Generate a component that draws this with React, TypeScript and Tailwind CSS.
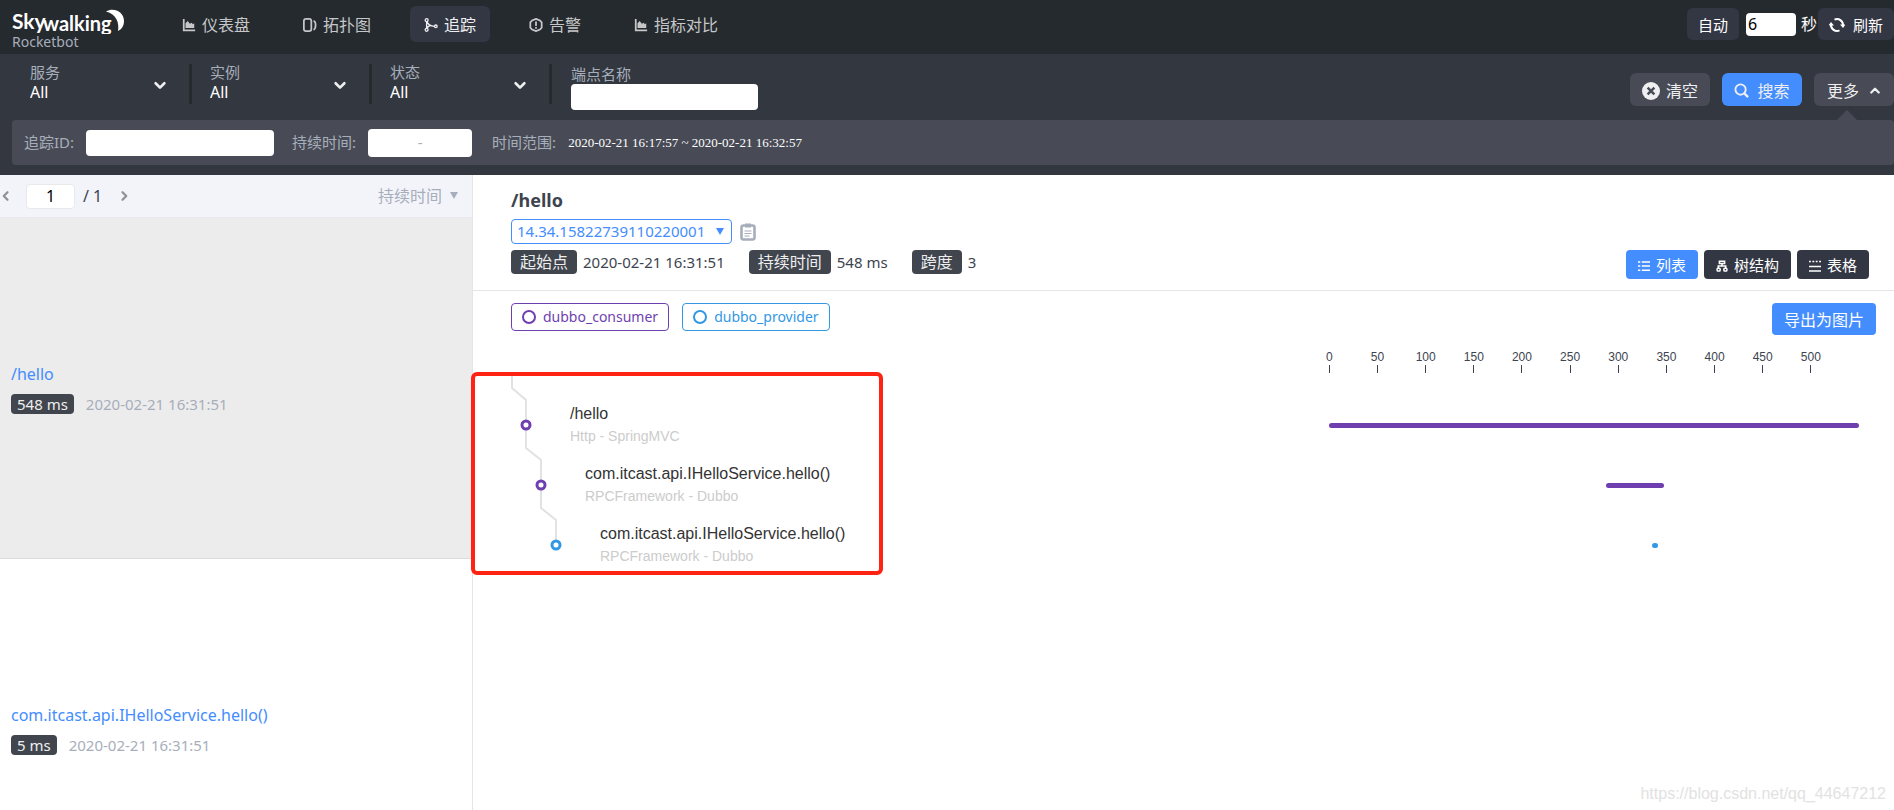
import type { ComponentProps, ReactNode } from 'react'
import clsx from 'clsx'

type IconProps = ComponentProps<'svg'>

const Icon = ({ className, children, ...props }: IconProps) => (
  <svg
    viewBox="0 0 16 16"
    fill="none"
    stroke="currentColor"
    strokeWidth="2"
    aria-hidden="true"
    className={clsx('shrink-0', className)}
    {...props}
  >
    {children}
  </svg>
)

const ChartIcon = (props: IconProps) => (
  <Icon {...props}>
    <path d="M2 1v13h13" />
    <path d="M4 11.500V6l2.500-2.500L9 6.500l2-1 1.500 1.500L14 6v5.500z" fill="currentColor" stroke="none" />
  </Icon>
)

const TopologyIcon = (props: IconProps) => (
  <Icon {...props}>
    <rect x="1" y="1" width="8.500" height="14" rx="2.500" />
    <path d="M12 3.500c3.200 0 3.200 9 0 10" />
  </Icon>
)

const TraceIcon = (props: IconProps) => (
  <Icon strokeWidth="1.500" {...props}>
    <circle cx="3" cy="2.500" r="1.700" />
    <circle cx="3" cy="13.500" r="1.700" />
    <circle cx="13.500" cy="9.500" r="1.500" />
    <path d="M3 4v8M3.500 4c1 4 4 5.200 8.500 5.500M3.500 12c.500-2 2-3 4-3.200" />
  </Icon>
)

const AlarmIcon = (props: IconProps) => (
  <Icon {...props}>
    <path d="M8 1l4.500 1.800L14.500 5v6l-2 2.200L8 15l-4.500-1.800-2-2.200V5l2-2.200z" />
    <path d="M8 4v5M8 10.300v2" />
  </Icon>
)

const RefreshIcon = (props: IconProps) => (
  <Icon {...props}>
    <path d="M5.500 2.600A6 6 0 0 1 14 8.500M10.500 13.400A6 6 0 0 1 2 7.500" />
    <path d="M11 7.500h5.500L14 11zM-.5 8.500H5L2 5z" fill="currentColor" stroke="none" />
  </Icon>
)

const ClearIcon = (props: IconProps) => (
  <Icon {...props}>
    <circle cx="8" cy="8" r="8" fill="currentColor" stroke="none" />
    <path d="M5 5l6 6M11 5l-6 6" stroke="#484b55" strokeWidth="2.200" />
  </Icon>
)

const SearchIcon = (props: IconProps) => (
  <Icon {...props}>
    <circle cx="7" cy="7" r="5.500" />
    <path d="M11 11l4 4" strokeWidth="2.500" />
  </Icon>
)

const ChevronIcon = (props: IconProps) => (
  <Icon strokeWidth="3" strokeLinecap="round" strokeLinejoin="round" {...props}>
    <path d="M3 6l5 5 5-5" />
  </Icon>
)

const ListIcon = (props: IconProps) => (
  <Icon {...props}>
    <path d="M0 2.500h3M5 2.500h11M0 8h3M5 8h11M0 13.500h3M5 13.500h11" />
  </Icon>
)

const TreeIcon = (props: IconProps) => (
  <Icon {...props}>
    <path d="M4.500 1.500h7v3h-7z" />
    <path d="M8 5v3M3 10.500V8h10v2.500" />
    <rect x="1.500" y="11" width="4" height="3.500" rx="1" />
    <rect x="10.500" y="11" width="4" height="3.500" rx="1" />
  </Icon>
)

const TableIcon = (props: IconProps) => (
  <Icon {...props}>
    <path d="M0 2h2.500M4.500 2H7M9 2h2.500M13.500 2H16M0 8.500h16M0 14.500h16" />
  </Icon>
)

const ClipboardIcon = (props: IconProps) => (
  <svg viewBox="0 0 16 18" fill="none" stroke="currentColor" aria-hidden="true" {...props}>
    <rect x="1.500" y="2.500" width="13" height="14" rx="2" strokeWidth="2.600" />
    <path d="M5 2.500h6" strokeWidth="4" />
    <path d="M4.500 8h7M4.500 10.500h7M4.500 13h5" />
  </svg>
)

const Logo = () => (
  <div className="w-[168px] shrink-0 pl-3">
    <svg viewBox="0 0 114 30" className="h-[30px] w-[114px]" fill="#fff" role="img" aria-label="Skywalking">
      <g fontFamily="Lato, sans-serif" fontWeight="700">
        <text x="0" y="25" fontSize="21">
          Sky
        </text>
        <text x="31" y="27" fontSize="20">
          walking
        </text>
      </g>
      <path d="M94 7.500c8-4.500 18 .500 18 9.500 0 5-2.500 8.500-6 10 1.500-8-1.500-17-12-19.500z" />
    </svg>
    <div className="text-sm leading-4 text-[#a7aebb]">Rocketbot</div>
  </div>
)

const navItems = [
  { label: '仪表盘', icon: ChartIcon },
  { label: '拓扑图', icon: TopologyIcon },
  { label: '追踪', icon: TraceIcon, active: true },
  { label: '告警', icon: AlarmIcon },
  { label: '指标对比', icon: ChartIcon },
]

const Header = () => (
  <header className="flex h-[54px] shrink-0 items-center bg-[#252a2f]">
    <Logo />
    <nav className="flex items-center gap-[25px] pb-1.5">
      {navItems.map(({ label, icon: NavIcon, active }) => (
        <a
          key={label}
          href="#"
          className={clsx(
            'flex h-9 items-center gap-1.5 rounded-md px-3.5 pt-0.5',
            active ? 'bg-[#333744] text-[#efeff1]' : 'text-[#c5c7c9]',
          )}
        >
          <NavIcon className="size-3.5" />
          {label}
        </a>
      ))}
    </nav>
    <div className="ml-auto flex items-center pb-1.5 text-[15px] text-white">
      <button className="h-8 rounded-md bg-[#333744] px-[11px] pt-0.5">自动</button>
      <input
        aria-label="刷新间隔"
        defaultValue="6"
        className="ml-[7px] mr-px h-[23px] w-[50px] rounded-sm bg-white pl-0.5 text-base text-black"
      />
      <span className="ml-1 text-base">秒</span>
      <button className="ml-px flex h-8 items-center gap-2 rounded-md bg-[#333744] px-[11px] pt-0.5">
        <RefreshIcon className="size-4" />
        刷新
      </button>
    </div>
  </header>
)

const FilterSelect = ({ label }: { label: string }) => (
  <label className="relative flex h-10 w-[180px] flex-col border-r-3 border-[#252a2f] pl-[18px]">
    <span className="text-[15px] leading-4 text-[#a7aebb]">{label}</span>
    <select className="h-6 w-36 appearance-none bg-transparent text-base leading-6 text-white">
      <option>All</option>
    </select>
    <ChevronIcon className="pointer-events-none absolute right-[22px] top-3.5 size-3.5 text-[#efeff1]" />
  </label>
)

const ToolButton = ({ className, children }: { className?: string; children: ReactNode }) => (
  <button
    className={clsx(
      'flex h-[33px] w-20 items-center justify-center gap-1.5 rounded-md pt-0.5 text-base text-[#efeff1]',
      className,
    )}
  >
    {children}
  </button>
)

const Filters = () => (
  <section className="shrink-0 bg-[#333840] pb-2.5 pl-3">
    <div className="flex h-[66px] items-start pt-2.5">
      <FilterSelect label="服务" />
      <FilterSelect label="实例" />
      <FilterSelect label="状态" />
      <label className="flex flex-col pl-[19px]">
        <span className="text-[15px] leading-5 text-[#a7aebb]">端点名称</span>
        <input className="h-[26px] w-[187px] rounded bg-white px-2 text-sm text-black" />
      </label>
      <div className="ml-auto flex gap-3 pt-[9px]">
        <ToolButton className="bg-[#484b55]">
          <ClearIcon className="size-[18px]" />
          清空
        </ToolButton>
        <ToolButton className="bg-[#448dfe]">
          <SearchIcon className="size-[15px]" />
          <span className="ml-0.5">搜索</span>
        </ToolButton>
        <div className="relative">
          <ToolButton className="bg-[#484b55]">
            更多
            <ChevronIcon className="ml-1 size-3 rotate-180" />
          </ToolButton>
          <span className="absolute left-[23px] top-[37px] border-x-10 border-b-10 border-x-transparent border-b-[#484b55]" />
        </div>
      </div>
    </div>
    <div className="flex h-[45px] items-center rounded bg-[#484b55] pl-3 text-[15px] text-[#a7aebb]">
      <label className="flex items-center gap-3">
        追踪ID:
        <input className="h-[26px] w-[188px] rounded bg-white px-2 text-sm text-black" />
      </label>
      <span className="ml-[18px]">持续时间:</span>
      <div className="ml-3 flex h-7 w-[104px] items-center rounded bg-white">
        <input aria-label="最小持续时间" className="w-0 flex-1 text-center text-sm text-black" />
        <span>-</span>
        <input aria-label="最大持续时间" className="w-0 flex-1 text-center text-sm text-black" />
      </div>
      <span className="ml-5">时间范围:</span>
      <span className="ml-3 font-['Liberation_Serif',serif] text-[13px] text-white">
        2020-02-21 16:17:57 ~ 2020-02-21 16:32:57
      </span>
    </div>
  </section>
)

const traces = [
  { name: '/hello', duration: '548 ms', time: '2020-02-21 16:31:51', selected: true },
  { name: 'com.itcast.api.IHelloService.hello()', duration: '5 ms', time: '2020-02-21 16:31:51' },
]

const TraceList = () => (
  <aside className="flex w-[473px] shrink-0 flex-col border-r border-[#e5e5e8]">
    <div className="flex h-[43px] shrink-0 items-center border-b border-[#e8e9ed] bg-[#f3f4f9] text-base text-[#3d444f]">
      <button aria-label="上一页">
        <ChevronIcon className="size-3 rotate-90 text-[#8e9196]" />
      </button>
      <input
        aria-label="页码"
        defaultValue="1"
        className="ml-3.5 h-[25px] w-[49px] rounded border border-[#e8e9ed] bg-white text-center text-black"
      />
      <span className="ml-2">/ 1</span>
      <button aria-label="下一页" className="ml-4">
        <ChevronIcon className="size-3 -rotate-90 text-[#8e9196]" />
      </button>
      <label className="relative ml-auto mr-3.5 text-[#a7aebb]">
        <select aria-label="排序" className="w-20 appearance-none bg-transparent">
          <option>持续时间</option>
        </select>
        <span className="pointer-events-none absolute right-0 top-2 border-x-4 border-t-7 border-x-transparent border-t-[#a7aebb]" />
      </label>
    </div>
    <ul className="grid auto-rows-[341px]">
      {traces.map(({ name, duration, time, selected }) => (
        <li
          key={name}
          className={clsx(
            'flex flex-col justify-center gap-2 border-b border-[#dcdcdc] px-[11px]',
            selected && 'bg-[#ececec]',
          )}
        >
          <a href="#" className="text-base leading-6 text-[#448dfe]">
            {name}
          </a>
          <div className="flex items-center gap-3 text-[15px] leading-5">
            <span className="rounded bg-[#40454e] px-1.5 text-[#eeeeee]">{duration}</span>
            <span className="text-[#a7aebb]">{time}</span>
          </div>
        </li>
      ))}
    </ul>
  </aside>
)

const Fact = ({ label, children }: { label: string; children: ReactNode }) => (
  <div className="flex items-center gap-1.5">
    <span className="h-6 rounded bg-[#40454e] px-[9px] text-base leading-6 text-[#eeeeee]">{label}</span>
    {children}
  </div>
)

const viewButton = 'flex h-[29px] items-center gap-1.5 rounded px-3 pt-0.5 text-[15px] text-white'

const DetailHeader = () => (
  <div className="flex items-end justify-between border-b border-[#e5e5e5] pb-[11px] pl-[38px] pr-[25px] pt-3 text-[15px] text-[#3d444f]">
    <div className="pb-[5px]">
      <h1 className="text-lg font-bold leading-[26px]">/hello</h1>
      <div className="mt-1.5 flex items-center gap-2">
        <label className="relative flex">
          <select
            aria-label="Trace ID"
            className="h-[25px] w-[221px] appearance-none rounded border border-[#448dfe] bg-white px-[5px] text-[#448dfe]"
          >
            <option>14.34.15822739110220001</option>
          </select>
          <span className="pointer-events-none absolute right-2 top-[9px] border-x-4 border-t-7 border-x-transparent border-t-[#448dfe]" />
        </label>
        <button aria-label="复制">
          <ClipboardIcon className="h-[18px] w-4 text-[#a7aebb]" />
        </button>
      </div>
      <div className="mt-1.5 flex gap-6">
        <Fact label="起始点">2020-02-21 16:31:51</Fact>
        <Fact label="持续时间">548 ms</Fact>
        <Fact label="跨度">3</Fact>
      </div>
    </div>
    <div className="flex gap-1.5">
      <button className={clsx(viewButton, 'bg-[#448dfe]')}>
        <ListIcon className="size-3" />
        列表
      </button>
      <button className={clsx(viewButton, 'bg-[#333744]')}>
        <TreeIcon className="size-3" />
        树结构
      </button>
      <button className={clsx(viewButton, 'bg-[#333744]')}>
        <TableIcon className="size-3" />
        表格
      </button>
    </div>
  </div>
)

const axisEnd = 550
const ticks = [0, 50, 100, 150, 200, 250, 300, 350, 400, 450, 500]

const spans = [
  { name: '/hello', layer: 'Http - SpringMVC', start: 0, duration: 550, indent: 'pl-[97px]', bar: 'bg-[#6f3fb0]' },
  {
    name: 'com.itcast.api.IHelloService.hello()',
    layer: 'RPCFramework - Dubbo',
    start: 287,
    duration: 61,
    indent: 'pl-28',
    bar: 'bg-[#6f3fb0]',
  },
  {
    name: 'com.itcast.api.IHelloService.hello()',
    layer: 'RPCFramework - Dubbo',
    start: 335,
    duration: 6,
    indent: 'pl-[127px]',
    bar: 'bg-[#3398e4]',
  },
]

const percent = (value: number) => `${(value / axisEnd) * 100}%`

const SpanTree = () => (
  <div className="relative pt-[60px]">
    <svg
      viewBox="0 0 100 206"
      className="absolute left-0 top-[34px] h-[206px] w-[100px]"
      fill="none"
      strokeWidth="2"
      aria-hidden="true"
    >
      <path d="M39 4v15l14 12v48l15 12v48l15 12v25" stroke="#e2e2e2" />
      <g fill="#fff" strokeWidth="3">
        <circle cx="53" cy="56" r="4" stroke="#6f3fb0" />
        <circle cx="68" cy="116" r="4" stroke="#6f3fb0" />
        <circle cx="83" cy="176" r="4" stroke="#3398e4" />
      </g>
    </svg>
    {spans.map(({ name, layer, indent }, index) => (
      <div
        key={index}
        className={clsx('flex h-[60px] flex-col justify-center font-["Liberation_Sans",sans-serif]', indent)}
      >
        <span className="text-base leading-[22px] text-[#333333]">{name}</span>
        <span className="text-sm leading-[22px] text-[#cccccc]">{layer}</span>
      </div>
    ))}
    {/* highlight frame */}
    <div className="pointer-events-none absolute -left-0.5 top-[37px] h-[203px] w-[412px] rounded-md border-4 border-[#ff2314]" />
  </div>
)

const Timeline = () => (
  <div>
    <div className="relative h-[60px] font-['Liberation_Sans',sans-serif] text-xs text-[#3d444f]">
      {ticks.map((tick) => (
        <div
          key={tick}
          className="absolute top-3.5 flex w-10 -translate-x-1/2 flex-col items-center"
          style={{ left: percent(tick) }}
        >
          {tick}
          <span className="h-2 w-px bg-[#3d444f]" />
        </div>
      ))}
    </div>
    {spans.map(({ start, duration, bar }, index) => (
      <div key={index} className="flex h-[60px] items-center">
        <div
          className={clsx('h-[5px] rounded-full', bar)}
          style={{ marginLeft: percent(start), width: percent(duration) }}
        />
      </div>
    ))}
  </div>
)

const legendItem = 'flex h-7 items-center gap-[7px] rounded border px-2.5 text-sm'

const TraceDetail = () => (
  <main className="min-w-0 flex-1">
    <DetailHeader />
    <div className="flex items-start gap-[13px] pl-[38px] pr-[18px] pt-3">
      <div className={clsx(legendItem, 'border-[#6f3fb0] text-[#6f3fb0]')}>
        <span className="size-3.5 rounded-full border-2 border-current" />
        dubbo_consumer
      </div>
      <div className={clsx(legendItem, 'border-[#3398e4] text-[#3398e4]')}>
        <span className="size-3.5 rounded-full border-2 border-current" />
        dubbo_provider
      </div>
      <button className="ml-auto h-8 rounded bg-[#448dfe] px-3 pt-0.5 text-base text-white">导出为图片</button>
    </div>
    <div className="grid grid-cols-[857fr_530fr] pr-[35px]">
      <SpanTree />
      <Timeline />
    </div>
  </main>
)

export default function App() {
  return (
    <div className="relative flex h-screen flex-col overflow-hidden bg-white font-['Noto_Sans','Noto_Sans_CJK_SC',sans-serif] text-base">
      <Header />
      <Filters />
      <div className="flex min-h-0 flex-1">
        <TraceList />
        <TraceDetail />
      </div>
      <span className="absolute bottom-1 right-2 font-['Liberation_Sans',sans-serif] text-base text-[#e2e2e2]">
        https://blog.csdn.net/qq_44647212
      </span>
    </div>
  )
}
